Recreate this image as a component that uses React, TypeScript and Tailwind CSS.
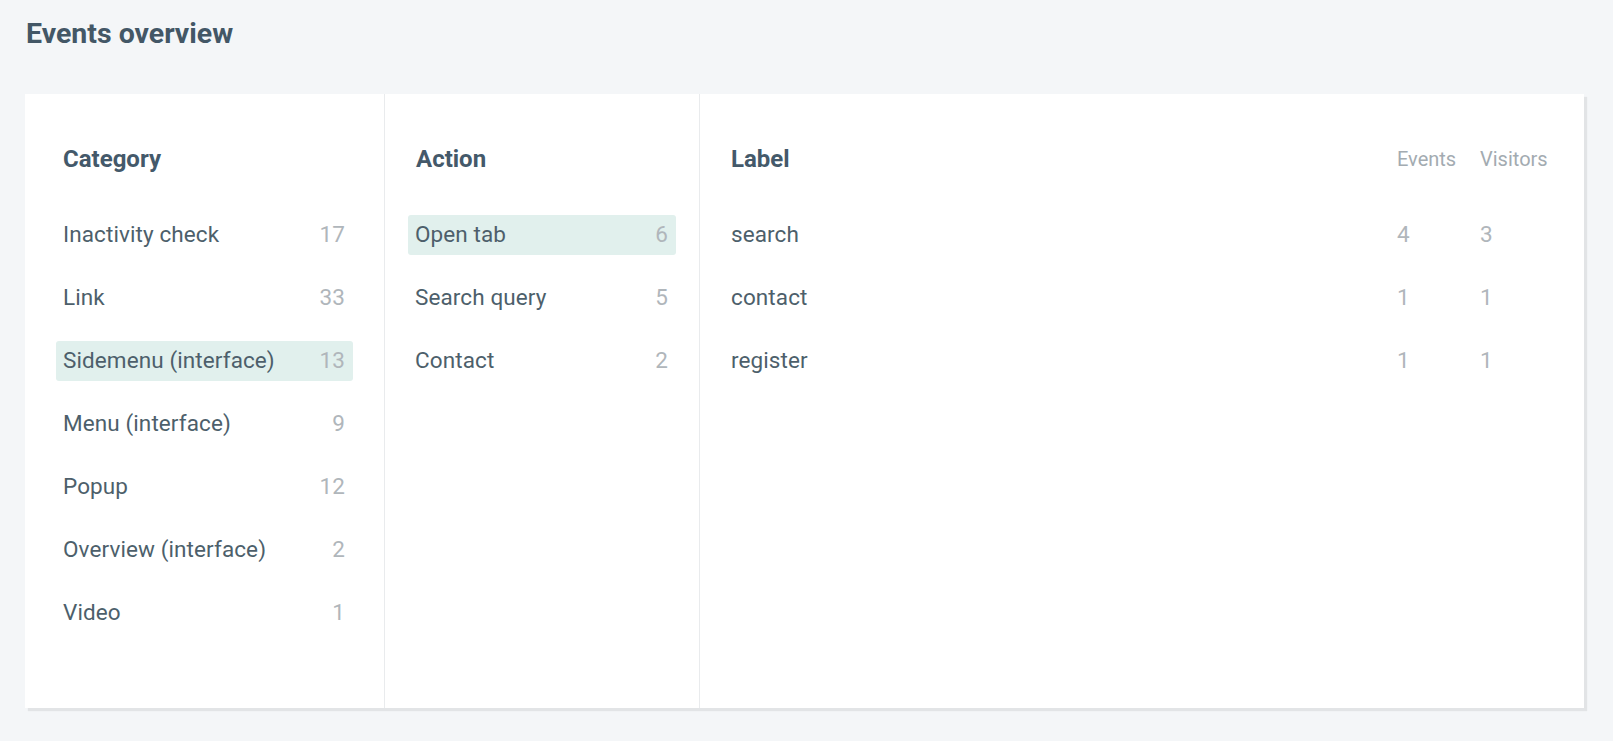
const categories = [
  { name: 'Inactivity check', count: 17 },
  { name: 'Link', count: 33 },
  { name: 'Sidemenu (interface)', count: 13, active: true },
  { name: 'Menu (interface)', count: 9 },
  { name: 'Popup', count: 12 },
  { name: 'Overview (interface)', count: 2 },
  { name: 'Video', count: 1 },
];

const actions = [
  { name: 'Open tab', count: 6, active: true },
  { name: 'Search query', count: 5 },
  { name: 'Contact', count: 2 },
];

const labels = [
  { name: 'search', events: 4, visitors: 3 },
  { name: 'contact', events: 1, visitors: 1 },
  { name: 'register', events: 1, visitors: 1 },
];

type Item = { name: string; count: number; active?: boolean };

function ListRow({ item }: { item: Item }) {
  return (
    <div
      className={`flex h-10 items-center justify-between rounded-[3px] pl-[7px] pr-2 text-[22.5px] tracking-[0.1px] text-[#4d5f6b] ${
        item.active ? 'bg-[#e1f0ed]' : ''
      }`}
    >
      <span>{item.name}</span>
      <span className="text-[#b0b6bb]">{item.count}</span>
    </div>
  );
}

export default function App() {
  return (
    <div
      className="min-h-screen bg-[#f4f6f8] pb-8"
      style={{ fontFamily: 'Roboto, "Noto Sans", sans-serif' }}
    >
      {/* Header */}
      <h1 className="pl-[26px] pt-[17px] text-[28.5px] font-bold leading-[34px] text-[#435766]">
        Events overview
      </h1>

      {/* Card */}
      <div className="ml-[25px] mt-[43px] flex h-[614px] w-[1559px] bg-white shadow-[3px_3px_1px_#e2e4e6]">
        {/* Category */}
        <div className="w-[360px] shrink-0 border-r border-[#e9ebed] px-[31px] pt-[51px]">
          <h2 className="pl-[7px] text-[24px] font-bold leading-[28px] text-[#44596a]">Category</h2>
          <div className="mt-[42px] flex flex-col gap-[23px]">
            {categories.map((c) => (
              <ListRow key={c.name} item={c} />
            ))}
          </div>
        </div>

        {/* Action */}
        <div className="w-[315px] shrink-0 border-r border-[#e9ebed] px-[23px] pt-[51px]">
          <h2 className="pl-2 text-[24px] font-bold leading-[28px] text-[#44596a]">Action</h2>
          <div className="mt-[42px] flex flex-col gap-[23px]">
            {actions.map((a) => (
              <ListRow key={a.name} item={a} />
            ))}
          </div>
        </div>

        {/* Label */}
        <div className="flex-1 pl-[31px] pr-[36px] pt-[51px]">
          <div className="flex h-[28px] items-baseline leading-[28px]">
            <h2 className="flex-1 text-[24px] font-bold text-[#44596a]">Label</h2>
            <span className="relative -top-px w-[83px] text-[20px] text-[#a3abb1]">Events</span>
            <span className="relative -top-px w-[68px] text-[20px] text-[#a3abb1]">Visitors</span>
          </div>
          <div className="mt-[42px] flex flex-col gap-[23px]">
            {labels.map((l) => (
              <div key={l.name} className="flex h-10 items-center text-[22.5px] tracking-[0.1px]">
                <span className="flex-1 text-[#4d5f6b]">{l.name}</span>
                <span className="w-[83px] text-[#b0b6bb]">{l.events}</span>
                <span className="w-[68px] text-[#b0b6bb]">{l.visitors}</span>
              </div>
            ))}
          </div>
        </div>
      </div>
    </div>
  );
}
